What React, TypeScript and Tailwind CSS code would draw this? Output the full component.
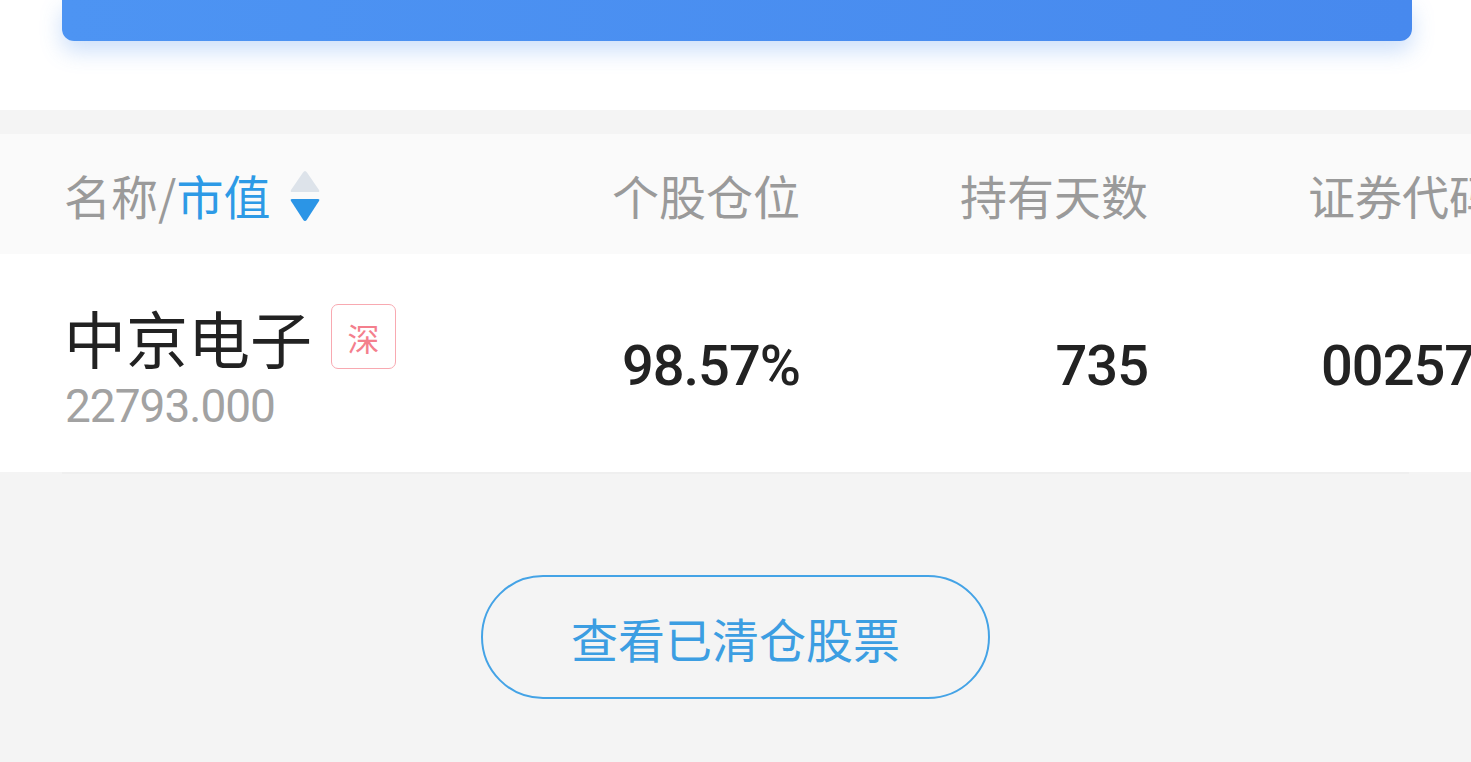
import React from "react";

const cjk = { fontFamily: '"Noto Sans CJK SC", "Noto Sans", sans-serif' };
const num = { fontFamily: 'Roboto, "Noto Sans", sans-serif' };

function SortIcon() {
  return (
    <svg width="32" height="56" viewBox="0 0 32 56" className="ml-[19px] mt-[6px]">
      <path d="M16 2 Q17 2 18 3.5 L30 21 Q31 23 29 23 L3 23 Q1 23 2 21 L14 3.5 Q15 2 16 2 Z" fill="#dde3ea" />
      <path d="M3 30 L29 30 Q31 30 30 32 L18 50.5 Q17 52 16 52 Q15 52 14 50.5 L2 32 Q1 30 3 30 Z" fill="#2b95e6" />
    </svg>
  );
}

export default function App() {
  return (
    <div className="w-[1471px] h-[762px] overflow-hidden bg-[#f4f4f4] flex flex-col" style={cjk}>
      <div className="bg-white h-[110px] px-[62px] shrink-0">
        <div className="w-[1350px] h-[41px] rounded-b-[12px] bg-gradient-to-r from-[#4d94f3] to-[#4789ee] shadow-[0_10px_22px_rgba(72,140,238,0.28)]" />
      </div>
      <div className="h-[24px] bg-[#f4f4f4] shrink-0" />
      <div className="h-[120px] bg-[#fafafa] flex items-center pl-[64px] shrink-0 whitespace-nowrap">
        <div className="w-[388px] shrink-0 flex items-center text-[47px] leading-none">
          <span className="text-[#9a9a9a]">名称/</span>
          <span className="text-[#2d9ae6]">市值</span>
          <SortIcon />
        </div>
        <div className="w-[348px] shrink-0 text-right text-[47px] leading-none text-[#9a9a9a]">个股仓位</div>
        <div className="w-[348px] shrink-0 text-right text-[47px] leading-none text-[#9a9a9a]">持有天数</div>
        <div className="w-[348px] shrink-0 text-right text-[47px] leading-none text-[#9a9a9a]">证券代码</div>
      </div>
      <div className="h-[218px] bg-white flex items-center pl-[64px] pt-[6px] shrink-0 whitespace-nowrap">
        <div className="w-[388px] shrink-0 flex flex-col">
          <div className="h-[66px] flex items-center">
            <span className="text-[62px] leading-none text-[#222]">中京电子</span>
            <span className="ml-[19px] w-[65px] h-[65px] rounded-[7px] border-[1.5px] border-[#f8a9b1] flex items-center justify-center text-[32px] leading-none text-[#f47f8d]">
              深
            </span>
          </div>
          <div className="mt-[13px] h-[46px] text-[46px] leading-[46px] text-[#a2a2a2] tracking-[-1px] pl-[1px]" style={num}>
            22793.000
          </div>
        </div>
        <div className="w-[348px] shrink-0 text-right text-[56px] leading-none font-medium text-[#222] tracking-[-1px]" style={num}>
          98.57%
        </div>
        <div className="w-[348px] shrink-0 text-right text-[56px] leading-none font-medium text-[#222] tracking-[-1px]" style={num}>
          735
        </div>
        <div className="w-[358px] shrink-0 text-right text-[56px] leading-none font-medium text-[#222] tracking-[-1px]" style={num}>
          002579
        </div>
      </div>
      <div className="mx-[62px] h-[2px] bg-[#efefef] shrink-0" />
      <div className="flex justify-center pt-[101px]">
        <button className="w-[509px] h-[124px] rounded-full border-2 border-[#44a3e6] text-[#3c9ee2] text-[47px] leading-none flex items-center justify-center" style={cjk}>
          查看已清仓股票
        </button>
      </div>
    </div>
  );
}
